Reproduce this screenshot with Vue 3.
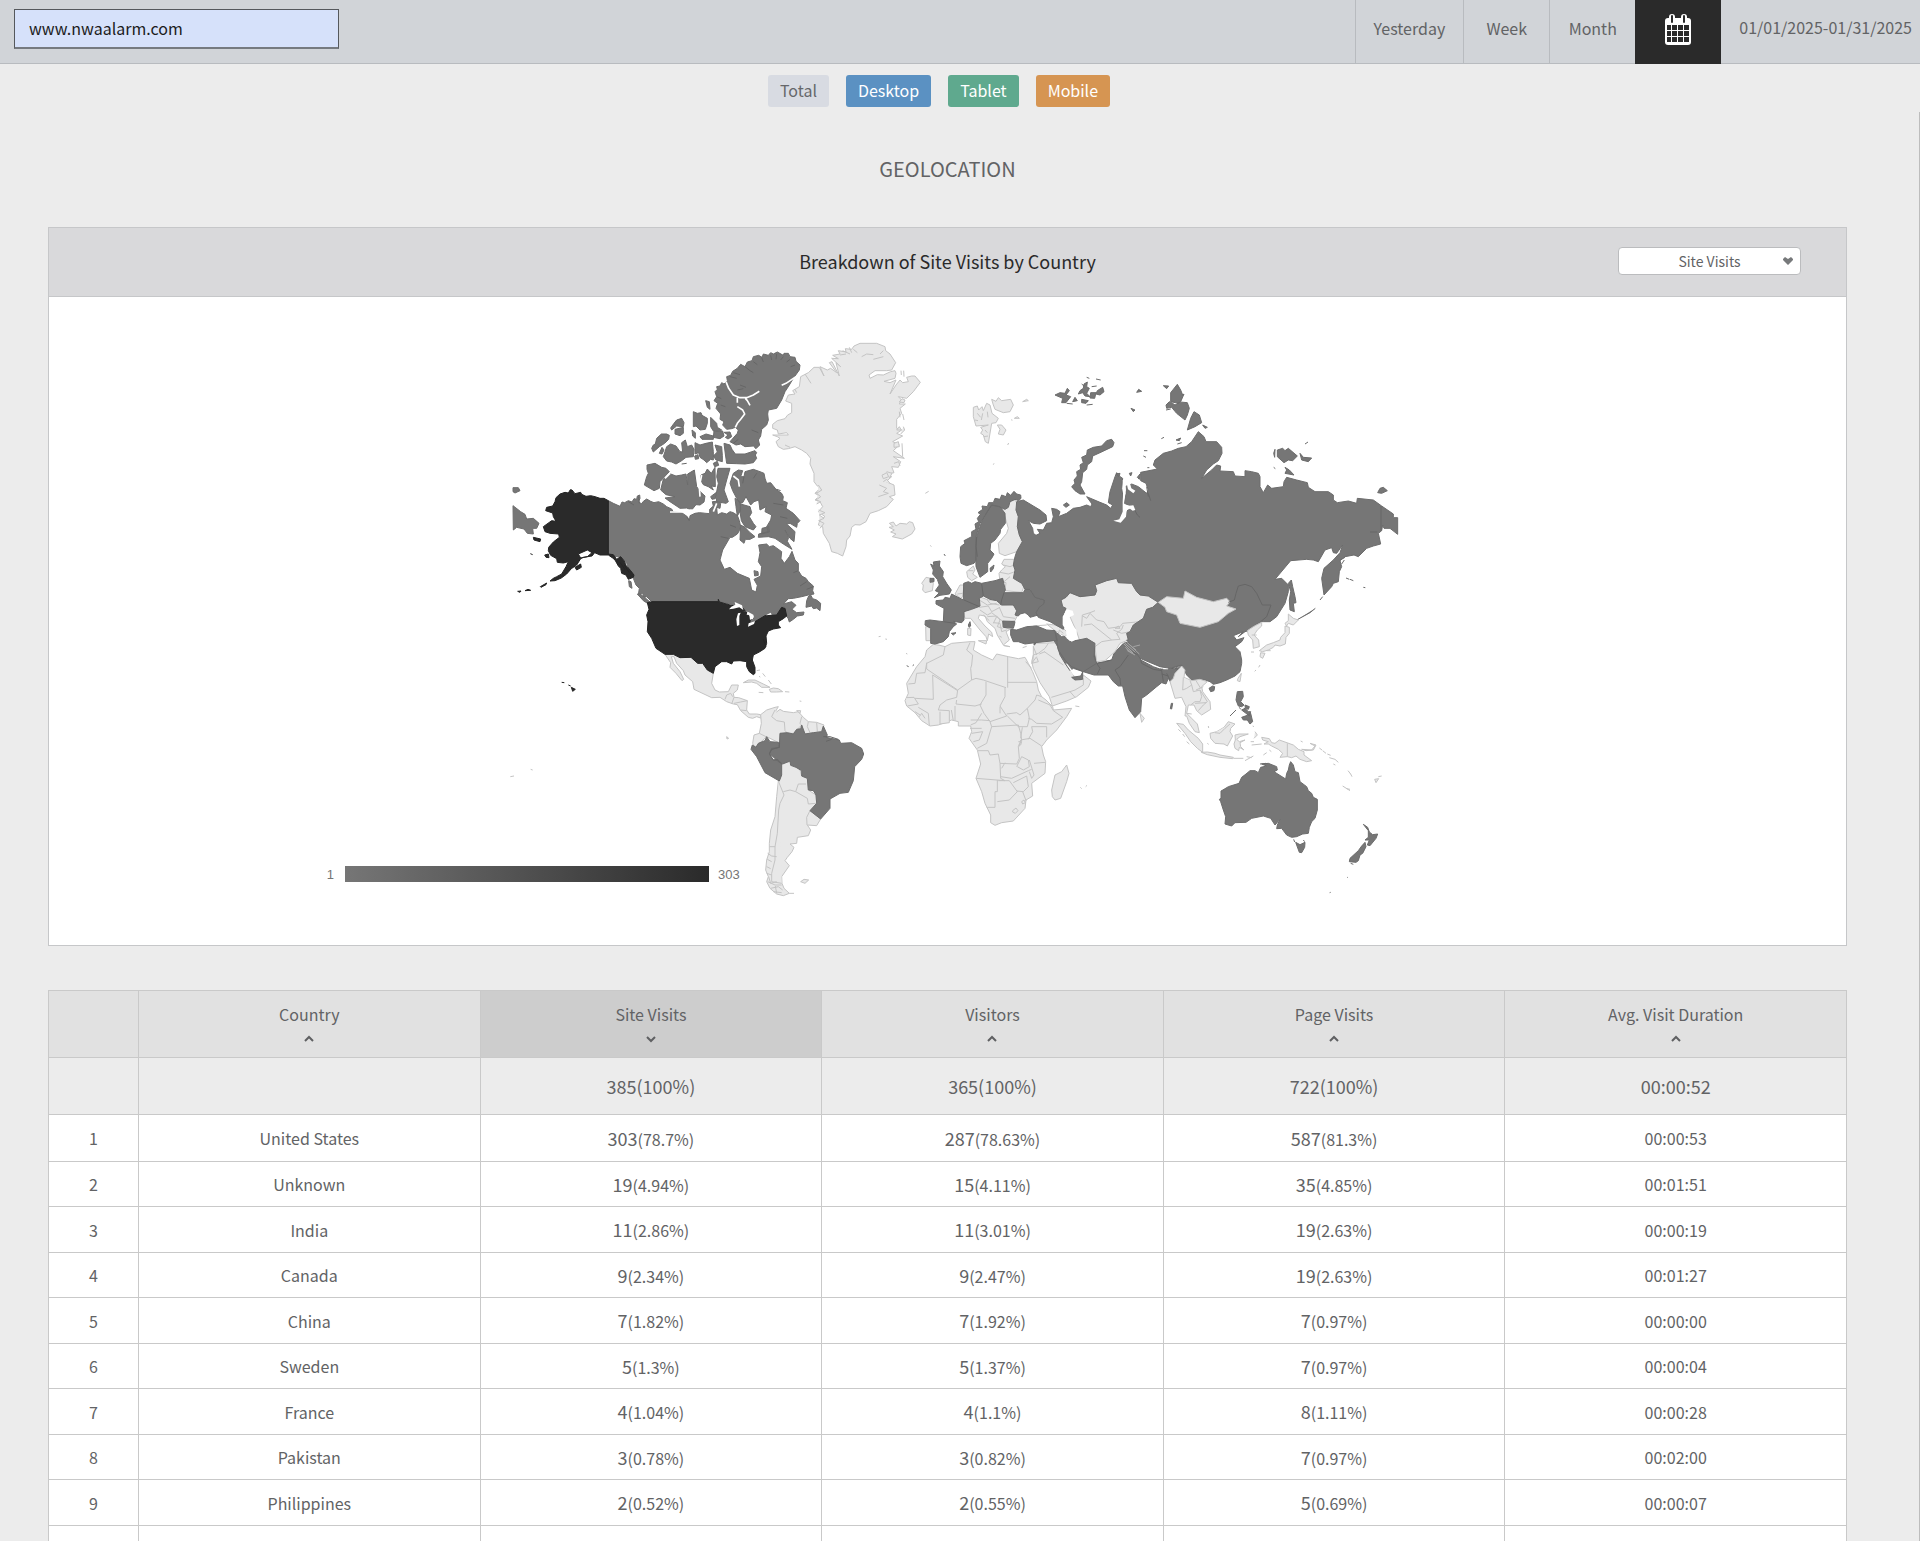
<script setup>
import { ref } from 'vue'

const site = ref('www.nwaalarm.com')
const metric = ref('Site Visits')
const metrics = ['Site Visits', 'Visitors', 'Page Visits']
const periods = ['Yesterday', 'Week', 'Month']
const devices = ['Total', 'Desktop', 'Tablet', 'Mobile']

const columns = [
  { label: 'Country' },
  { label: 'Site Visits', active: true },
  { label: 'Visitors' },
  { label: 'Page Visits' },
  { label: 'Avg. Visit Duration' },
]

const totals = ['385(100%)', '365(100%)', '722(100%)', '00:00:52']

const rows = [
  ['United States', '303', '78.7%', '287', '78.63%', '587', '81.3%', '00:00:53'],
  ['Unknown', '19', '4.94%', '15', '4.11%', '35', '4.85%', '00:01:51'],
  ['India', '11', '2.86%', '11', '3.01%', '19', '2.63%', '00:00:19'],
  ['Canada', '9', '2.34%', '9', '2.47%', '19', '2.63%', '00:01:27'],
  ['China', '7', '1.82%', '7', '1.92%', '7', '0.97%', '00:00:00'],
  ['Sweden', '5', '1.3%', '5', '1.37%', '7', '0.97%', '00:00:04'],
  ['France', '4', '1.04%', '4', '1.1%', '8', '1.11%', '00:00:28'],
  ['Pakistan', '3', '0.78%', '3', '0.82%', '7', '0.97%', '00:02:00'],
  ['Philippines', '2', '0.52%', '2', '0.55%', '5', '0.69%', '00:00:07'],
  ['Brazil', '2', '0.52%', '2', '0.55%', '3', '0.42%', '00:00:12'],
].map(([country, sv, svp, v, vp, pv, pvp, time]) => ({
  country,
  time,
  stats: [[sv, svp], [v, vp], [pv, pvp]],
}))

// Each region holds its outlines in a local grid, three units to a pixel.
const regions = [
  {
    name: 'north-america-arctic',
    origin: [500, 330],
    shapes: [
      ['mid', 'M325,512 340,520 360,529 366,516 374,518 385,512 396,516 402,506 410,508 412,498 419,495 420,505 416,514 424,522 430,514 440,507 452,514 462,518 476,515 490,522 500,530 515,537 520,546 545,548 562,560 568,572 570,557 585,550 598,548 629,551 629,538 640,528 637,515 648,514 655,512 662,520 660,535 650,532 652,555 665,548 680,552 690,545 700,548 712,556 718,572 722,590 718,602 712,612 697,622 690,622 668,660 660,690 673,718 690,712 712,730 748,745 755,780 768,786 772,766 762,748 782,738 785,710 775,695 780,668 776,645 800,642 808,650 820,647 845,665 843,685 853,700 868,680 876,664 885,690 895,700 895,722 905,738 918,745 925,755 940,768 938,782 942,792 925,795 905,800 880,805 865,806 850,822 875,815 888,826 876,838 890,848 912,846 910,855 892,858 880,868 868,876 864,864 858,858 855,832 845,830 830,855 795,865 765,885 748,888 752,868 762,870 757,855 735,850 725,840 705,825 690,822 657,815 655,808 652,815 455,815 440,800 432,802 428,790 415,795 418,775 408,765 400,745 380,700 362,682 340,678 325,672Z'],
      ['mid', 'M920,812 926,798 932,795 938,806 950,810 962,820 960,842 950,834 940,836 935,828 918,832Z M412,792 420,792 434,802 452,818 446,822 430,812Z M386,752 393,755 396,775 388,770Z'],
      ['mid', 'M665,158 672,162 682,152 680,140 692,136 698,124 712,115 722,103 735,110 742,96 756,92 760,80 776,76 786,82 790,72 805,76 812,68 820,72 832,66 850,76 852,70 865,70 870,80 885,82 888,94 900,105 898,120 880,145 868,165 855,185 845,210 830,235 805,240 803,252 805,270 800,285 785,298 782,318 775,330 779,345 768,356 760,348 735,350 722,342 708,345 690,335 712,310 715,300 706,292 695,296 680,298 668,285 672,275 660,268 662,252 648,235 653,220 642,212 650,200 645,185 652,178 650,170 660,168Z'],
      ['mid', 'M672,340 690,345 696,358 706,372 735,372 765,362 770,368 766,375 770,385 760,398 735,402 710,401 680,400 676,372Z M580,245 592,250 603,248 606,256 622,265 622,280 616,298 600,300 588,288 580,290Z M617,212 628,215 630,238 622,232Z M632,262 650,280 652,292 665,300 652,304 640,303 632,290Z M642,303 668,303 672,318 660,326 640,322Z M672,307 690,306 695,320 684,327 676,322 684,315Z M522,280 530,270 545,265 552,278 550,290 530,288 515,300 512,294Z M525,298 550,292 550,310 540,317 525,312Z M576,300 586,308 586,325 578,318Z M455,355 460,345 466,342 470,325 484,312 500,312 508,316 506,328 494,340 478,350 460,366Z'],
      ['mid', 'M478,370 486,352 492,360 486,372Z M490,380 500,350 512,342 528,348 540,365 548,366 545,338 556,330 562,350 575,345 582,358 580,380 558,382 545,392 528,402 515,396 500,393Z M585,338 600,345 618,340 637,336 640,365 640,390 632,388 620,398 612,390 600,382 596,368 585,372Z M584,378 594,374 596,386 586,388Z M600,320 618,312 640,318 640,328 606,328Z M645,345 665,350 667,376 667,395 648,390 640,378 652,366Z M640,400 652,394 656,406 644,410Z'],
      ['mid', 'M441,405 465,400 485,412 498,415 508,425 480,455 478,475 462,482 450,475 433,465 440,440 445,430 441,418Z M482,480 490,447 512,432 528,438 545,435 558,432 563,465 563,432 583,420 590,470 602,486 615,498 612,516 600,525 588,524 575,540 560,534 540,535 510,515 495,504 525,500 498,494Z M603,435 615,430 622,417 634,430 645,412 646,470 634,468 640,480 625,470 610,464 602,450Z M654,415 690,415 680,450 672,480 685,515 678,520 650,515 648,495 655,460 650,440Z M632,500 648,488 646,506 636,508Z'],
      ['mid', 'M700,430 715,420 728,422 722,440 732,440 735,425 760,418 780,425 792,430 795,445 800,460 812,458 828,478 845,490 850,500 848,512 862,518 858,535 880,550 900,572 892,580 890,592 870,580 860,582 885,605 882,635 870,625 855,600 866,622 862,634 876,658 850,642 825,625 805,620 775,622 776,612 805,605 800,590 812,570 815,555 795,545 798,530 780,540 776,510 762,515 752,525 738,500 728,518 720,520 710,505 698,482 690,460Z M722,522 750,530 755,548 748,560 760,580 768,590 760,600 735,590 724,572 720,545Z M722,585 735,592 748,606 765,620 750,628 736,628 732,640 720,630Z M705,505 720,515 722,540 712,558 708,530Z M786,595 806,590 808,606 785,612Z M762,722 774,725 775,736 764,738Z'],
      ['water', 'M678,155 686,175 700,195 720,203 740,203 760,195 778,184 M712,203 712,218 M736,205 742,212 750,226 M712,230 728,240 734,252 722,268 712,280 706,292 M888,140 858,160 845,166 M510,430 495,445 M605,435 598,470 600,500 M700,438 715,450 718,470 M765,555 780,575 772,590 M510,546 545,546 572,540 625,545 M640,545 650,520'],
      ['coast', 'M735,110 750,122 760,128 M760,95 772,104 M785,83 790,96 M812,76 815,90 M830,72 828,88 M850,80 842,90 M870,88 860,96 M885,105 872,110 M690,140 710,145 M700,128 720,134 M720,165 738,172 M712,180 730,176 M650,200 664,206 M662,225 676,230 M755,300 775,308 M700,340 715,328 M830,478 842,482 M820,520 850,525 M840,560 862,565 M732,440 728,460 M770,430 760,445 M545,402 560,400 M560,560 568,572 M690,585 708,592 M662,620 685,625 M385,515 402,525 M416,500 418,520 M940,770 920,778 M895,722 880,728 M920,755 900,768'],
      ['top', 'M325,512 312,505 300,505 285,500 272,497 258,499 245,493 242,487 225,491 216,480 211,479 205,489 195,487 180,492 168,503 165,515 158,528 140,532 137,542 158,549 160,560 168,574 155,572 130,590 135,605 150,610 176,612 178,622 160,636 146,652 145,662 152,676 170,686 172,697 190,699 205,695 198,710 185,732 170,740 160,745 150,753 165,752 184,744 200,732 214,716 230,705 242,686 250,682 276,678 284,668 300,675 325,675 338,684 345,690 355,708 362,715 365,730 378,735 385,748 400,742 402,735 392,722 378,706 372,692 362,680 350,688 340,674 325,672Z M235,672 262,660 276,668 262,680 242,684Z M100,622 122,627 120,635 102,630Z M121,770 140,759 138,764 123,772Z M53,784 63,783 60,787Z M75,782 84,778 92,781Z M134,675 145,672 147,683 138,682Z M225,712 242,702 244,712 230,720Z M91,671 98,674 M360,697 376,720 M372,705 388,728'],
      ['mid', 'M39,527 62,545 75,553 80,567 100,565 117,580 110,595 98,595 100,612 82,610 72,597 50,592 40,600Z M39,473 55,473 60,482 45,489 39,485Z'],
    ],
  },
  {
    name: 'greenland',
    origin: [740, 330],
    shapes: [
      ['none', 'M98,283 112,272 135,266 142,256 155,248 155,220 137,213 145,195 165,192 158,182 178,170 182,140 205,128 222,112 238,112 252,138 240,110 262,120 272,115 290,128 268,98 276,95 298,138 288,98 302,110 275,85 295,86 278,76 300,72 295,62 318,66 316,56 335,58 342,48 360,40 410,40 435,50 437,62 450,72 467,98 455,120 440,122 405,122 387,135 390,145 412,134 430,135 452,125 465,122 468,130 465,145 432,154 450,158 468,150 450,192 468,165 480,150 488,158 505,155 500,142 515,138 525,138 541,157 520,185 500,205 475,200 485,210 478,222 496,222 480,235 485,250 470,268 470,295 485,300 470,310 488,318 458,335 478,345 460,362 493,385 460,380 482,395 475,412 455,410 462,428 428,435 455,440 438,455 462,465 465,495 448,500 460,508 440,530 415,542 390,550 378,575 360,585 345,584 335,592 330,618 320,630 318,650 308,678 292,670 275,665 268,640 250,610 248,590 235,585 240,570 255,560 235,545 248,530 240,515 225,510 238,498 225,490 245,480 232,468 222,455 222,430 210,402 212,385 200,370 185,360 165,350 145,356 130,358 115,350 108,335 120,325 112,320 98,315 145,315 140,308 115,312 112,300 98,295Z'],
      ['none', 'M448,580 460,576 468,588 480,580 500,582 508,575 518,578 525,597 515,612 487,627 457,620 468,612 452,606 463,600 447,592 460,590Z M700,232 712,228 716,240 726,230 730,242 740,220 750,225 756,250 775,265 768,278 755,280 745,340 736,335 730,315 722,310 728,300 722,292 745,285 708,288 700,260Z M755,208 768,214 775,203 785,212 812,208 820,225 810,245 790,248 765,238 760,225Z M772,285 785,285 798,300 790,315 775,312 780,298Z M848,215 860,208 865,212Z M823,265 832,260 838,265Z M815,268 816,272 M803,345 806,339 M760,404 762,400 M556,490 566,484 M571,646 574,650'],
      ['none', 'M483,122 484,135 M491,122 492,140 M486,206 495,210 492,218 478,216Z M488,252 492,270 M480,262 478,245 M490,290 494,300 482,312 M470,300 478,290 484,300Z M462,340 475,335 478,350 462,352Z M486,340 488,380 M462,400 476,395 480,408 M426,436 440,428 446,440 430,446Z M440,425 456,430 448,444 M430,455 440,448 450,460 M418,465 440,475 430,485 445,490 415,500 M235,465 245,480 230,490 242,500 228,510 242,515 230,522 M236,540 255,548 238,555 252,565 236,572 252,580 240,595 M225,490 235,480 M195,132 213,160 M300,75 318,72 M308,62 330,72 M328,52 335,68 M340,58 352,68 M365,80 380,72 400,74 M420,72 430,62 M400,88 430,80 M165,178 170,188 M135,345 150,352 M712,250 722,262 M728,250 724,270 M742,245 744,262 M735,300 742,308 M732,320 744,318 M705,270 714,272'],
    ],
  },
  {
    name: 'americas',
    origin: [500, 580],
    shapes: [
      ['none', 'M495,223 520,223 540,233 573,232 593,250 608,250 622,270 640,280 635,310 645,330 658,336 685,335 695,315 715,315 712,330 700,340 702,352 716,353 742,362 740,390 748,402 770,402 782,404 785,415 770,410 758,415 745,412 722,392 712,374 700,372 680,365 660,352 635,353 582,328 578,305 555,285 550,272 530,250 522,230 514,230 520,250 540,275 551,298 546,302 528,280 510,262 512,248Z'],
      ['none', 'M782,404 800,390 825,382 835,380 822,402 840,388 850,394 880,398 895,395 910,412 925,425 950,427 972,435 965,455 915,462 905,435 880,460 840,460 840,490 800,470 765,502 758,490 762,465 778,460 784,430Z'],
      ['none', 'M845,550 870,545 900,570 905,588 922,595 925,630 948,645 950,670 930,692 962,717 950,737 922,735 932,750 925,767 892,772 890,790 870,792 882,802 876,815 862,832 855,842 868,857 845,890 846,910 852,925 868,940 850,947 830,942 810,925 800,905 805,890 797,870 800,840 808,815 808,790 812,750 825,710 830,650 835,603 842,590Z'],
      ['none', 'M730,308 745,300 765,300 790,312 810,322 785,322 770,310 755,306Z M808,328 820,324 835,326 848,335 830,336 812,336Z M776,337 790,338 M855,335 868,336 M770,272 780,270 M788,280 796,290 M805,300 814,312 M778,288 780,292 M890,392 902,392 900,400Z M899,363 904,364 M680,470 686,475 681,477Z M1136,170 1142,169 M1156,177 1161,178 M31,590 42,588 M92,568 98,570 M902,905 912,898 926,900 915,910Z M868,940 882,940'],
      ['none', 'M825,390 815,410 830,422 853,426 855,452 865,462 M905,410 900,430 905,436 M925,425 922,440 930,458 M950,428 952,455 M778,460 798,470 M675,358 680,345 692,340 698,350 M695,372 702,352 M702,370 722,366 742,362 M722,390 740,392 M835,603 852,645 840,670 836,690 832,760 825,800 825,840 815,880 815,905 845,910 M850,635 870,630 887,635 895,612 918,612 M887,635 922,655 925,672 948,670 M930,692 920,712 921,735 M808,800 826,800 M802,838 815,845 M800,860 812,866 M800,880 815,885 M803,905 825,915 845,915 M812,925 835,920 848,930 M820,935 845,938 M803,820 815,828 830,830 M806,890 812,910 830,905 M826,918 830,940'],
      ['mid', 'M840,460 862,458 880,462 890,448 902,446 905,435 915,462 940,458 965,455 970,438 982,465 978,472 1018,480 1022,490 1055,488 1085,505 1091,522 1085,538 1064,560 1060,602 1045,637 1020,640 990,657 990,685 962,717 930,692 950,670 948,645 940,632 925,630 922,595 905,588 905,572 888,562 872,556 870,543 848,552 835,545 808,520 815,505 838,502Z M800,470 810,485 835,487 838,502 815,508 808,522 820,540 832,538 845,550 845,585 838,603 795,578 770,530 753,508 757,495 768,502 775,490 795,482Z'],
      ['coast', 'M970,470 990,470 1015,478 M978,484 995,478 M838,487 838,502 815,508 808,522 820,540 832,540 845,552'],
      ['top', 'M442,68 455,65 655,65 655,58 658,66 690,75 705,78 725,80 735,92 745,105 752,112 748,138 762,130 765,125 795,107 830,105 845,82 855,85 860,108 850,116 835,125 835,135 842,143 820,147 805,153 798,168 800,190 795,205 778,216 760,225 757,240 765,262 765,280 760,284 748,275 740,260 740,245 720,242 700,243 695,252 680,245 665,245 645,260 640,280 622,270 608,250 593,250 573,232 540,233 520,223 495,223 468,205 455,175 442,155 444,125 440,105 447,88Z M185,307 193,308 M205,315 212,318 M214,322 226,328 218,334Z M790,178 798,200'],
      ['sea', 'M687,88 694,80 706,74 704,66 726,76 730,90 718,82 700,86Z M711,138 709,118 714,100 722,98 718,108 718,135Z M726,92 745,96 760,104 762,112 750,120 748,105 740,104 742,96Z M744,140 746,130 765,124 762,132Z M798,106 812,98 815,104Z'],
    ],
  },
  {
    name: 'africa-middle-east',
    origin: [890, 600],
    shapes: [
      ['none', 'M130,133 150,136 165,140 185,130 240,125 255,125 250,150 275,165 308,180 320,162 355,170 385,176 405,172 415,190 428,215 440,245 445,270 455,290 468,300 488,320 490,330 545,325 530,350 500,390 470,420 455,440 460,465 467,485 465,520 425,550 428,588 408,600 405,625 370,663 335,668 315,676 302,668 302,645 285,610 275,575 258,535 272,492 262,450 237,415 245,395 242,378 205,378 205,365 185,360 145,375 120,378 95,362 75,338 50,318 45,302 55,280 50,250 80,200 105,170 110,150Z'],
      ['none', 'M430,140 437,130 500,128 503,145 525,185 548,220 556,238 575,240 580,225 603,243 595,262 560,290 530,303 487,318 478,290 450,248 430,205 425,185 430,165Z M485,570 495,525 515,515 530,495 537,520 530,545 512,595 495,600 487,590Z M750,340 763,355 755,367Z M571,562 575,566 M587,560 591,556 M556,318 568,320 M48,160 52,162 M342,137 360,140 M398,143 410,139'],
      ['none', 'M165,140 160,165 110,190 105,218 80,220 75,250 55,252 M110,188 110,207 203,270 245,240 M230,150 248,165 245,195 242,205 245,240 M240,128 230,150 M128,225 130,298 75,295 M128,225 203,272 M203,270 200,292 170,300 150,315 145,330 M48,293 72,292 85,312 52,318 M245,240 258,235 280,240 348,263 M353,170 353,263 M353,247 440,247 M345,263 345,290 330,318 350,348 300,365 282,340 270,315 288,285 288,245 M200,300 198,312 255,318 275,312 M350,342 380,338 390,345 412,325 435,300 440,285 455,290 M330,340 330,320 M412,325 418,355 412,380 385,380 352,348 M445,300 480,315 490,332 518,352 485,372 440,370 425,358 415,355 M425,380 470,380 470,412 M300,365 305,380 385,375 392,400 395,420 385,440 388,475 380,492 330,490 325,462 300,465 295,452 262,452 M305,380 290,430 262,445 M242,360 275,360 300,362 M275,340 258,368 242,375 M278,395 268,420 250,425 M245,400 278,395 M330,490 332,535 345,542 258,535 M335,505 345,488 M332,530 365,535 415,512 425,508 M380,500 395,470 415,480 418,500 400,510 382,500 M418,480 432,525 425,535 418,515 M432,490 465,487 M322,540 322,575 315,575 315,622 290,622 M325,542 358,542 382,575 358,600 322,605 M370,548 410,528 415,560 400,575 380,573 M398,575 408,602 M387,440 392,420 420,415 455,438 M385,425 395,425 392,435 385,435 M397,382 392,415 M425,380 428,395 415,418 M118,378 115,340 85,322 M150,335 150,372 178,368 178,332 145,330 M184,330 190,362 M195,318 195,362 M75,335 90,345 M88,350 95,340 105,355 M240,385 275,385 M368,632 378,624 384,632 376,640 368,636Z M395,605 402,600 406,608 398,612Z M407,185 425,205 M428,190 430,165 445,160 465,145 475,130 M440,170 425,190 445,185 440,172 M463,155 520,195 M465,155 448,162 M540,275 555,270 580,255 580,235 M484,292 540,275 555,292 M430,140 440,165'],
      ['mid', 'M467,110 497,110 505,128 550,125 590,115 612,125 615,165 620,190 665,180 672,160 700,130 720,125 740,150 752,180 790,200 812,208 835,205 840,198 870,190 880,202 865,220 845,252 835,235 828,252 815,248 800,260 770,285 755,295 752,335 735,353 718,330 705,290 698,258 685,258 670,245 655,225 612,225 580,215 550,205 540,212 525,190 510,165 503,140 490,118Z M545,232 572,228 578,216 578,238 555,240Z M844,310 848,310 845,327 841,326Z M50,197 56,200 M68,197 72,194 M432,128 438,130 432,135Z'],
      ['coast', 'M612,165 620,190 665,180 M620,190 630,205 622,222 M715,165 690,200 675,210 690,235 692,255 M752,180 755,190 790,208 815,212 812,205 M815,200 840,200 M815,222 835,228 M815,212 820,245 M830,220 840,240 M835,200 845,205 870,208 M715,150 745,165'],
      ['hatch', 'M703,128 740,160 M715,128 752,162 M706,142 722,156 M735,140 752,136 M712,152 735,165 M842,204 850,198 M852,206 860,198 M862,204 870,196'],
      ['sea', 'M818,203 835,203 834,208 820,208Z M527,190 532,192 555,222 550,225Z'],
    ],
  },
  {
    name: 'eurasia',
    origin: [900, 370],
    shapes: [
      ['none', 'M483,690 498,682 510,668 540,680 585,675 590,662 585,645 620,632 650,625 655,638 695,640 710,665 720,675 745,678 775,697 758,712 740,718 730,745 700,765 690,785 680,790 685,810 660,820 645,845 615,872 590,875 585,830 540,815 530,785 512,745 500,718 488,710Z'],
      ['none', 'M297,410 315,418 325,412 330,395 345,390 352,402 348,420 355,440 352,470 358,495 367,515 350,545 315,557 298,550 295,520 320,490 325,475 315,440Z M77,770 95,772 92,812 78,812Z M68,660 70,645 65,640 78,622 92,625 100,640 97,662 75,668Z M200,605 220,588 225,600 218,612 232,622 215,632 203,622Z M165,672 180,645 192,645 188,680 182,685Z M305,582 312,568 342,568 342,585 348,600 345,620 355,630 370,640 372,650 365,667 315,662 318,638 300,635 297,610 305,600 316,590Z'],
      ['none', 'M190,725 215,715 235,712 238,680 265,690 300,690 305,705 335,703 345,708 350,725 355,730 345,752 310,755 308,770 330,778 318,785 328,810 310,825 302,812 292,795 285,775 262,755 255,738 238,735 235,745 255,768 275,787 278,800 266,792 262,812 258,800 240,780 212,745 195,745Z M235,812 260,812 258,822Z M203,775 213,775 212,797 203,795Z M440,762 465,765 490,775 505,790 495,800 480,790 465,782Z M310,826 330,830 M298,798 305,802 M440,765 400,768'],
      ['none', 'M545,770 547,735 570,728 585,722 M548,738 560,745 570,730 590,750 612,755 625,775 660,770 668,760 720,755 M552,765 575,762 635,810 660,808 M660,808 650,790 665,778 670,765 M640,780 665,790 690,785 M645,775 660,775 655,768Z M585,830 605,815 635,810 M300,607 325,612 345,605 M312,635 330,620 M310,585 330,590 342,585 M238,690 262,705 290,700 M238,712 265,708 275,725 300,712 M240,720 262,735 275,728 290,740 280,760 M262,740 290,738 300,750 292,770 308,775 M290,740 310,755 M298,712 310,740 345,745 M280,758 300,760 305,785 320,780 M250,735 268,752 M298,705 270,700 262,690 M205,602 220,602 M475,795 478,780 490,790 M172,672 188,670'],
      ['mid', 'M182,530 195,520 192,512 215,500 215,485 228,478 225,462 236,455 232,445 242,432 234,428 248,418 246,408 262,410 266,398 280,398 285,385 300,388 305,375 318,380 322,368 332,376 342,364 350,372 362,375 363,385 356,392 345,388 330,395 325,412 315,418 297,410 275,405 262,425 240,460 228,500 228,570 222,580 200,587 183,580 180,560Z M230,500 245,455 262,425 275,405 300,410 315,430 316,460 302,478 300,490 285,510 272,520 270,540 282,552 275,565 263,580 263,605 240,622 228,590 227,560Z M270,595 282,585 280,596 272,606Z'],
      ['mid', 'M92,582 102,588 100,576 120,573 118,588 130,605 128,620 140,640 154,660 148,672 120,676 103,683 118,668 106,662 118,645 112,628 98,612 100,600Z M90,625 102,625 102,635 90,637Z M132,552 136,558 M191,640 205,635 215,640 225,635 245,640 285,632 308,625 316,660 312,668 370,668 375,658 390,658 405,682 433,690 432,705 418,712 410,725 415,735 390,742 385,735 375,728 360,732 355,738 345,735 350,722 340,705 305,705 290,692 270,688 250,678 238,685 240,708 215,718 192,725 192,750 185,758 160,754 170,762 160,770 148,785 145,800 130,815 105,822 92,820 92,775 75,765 76,752 90,750 130,755 132,715 108,702 108,692 130,690 135,682 150,685 155,672 190,690Z M154,790 168,788 160,795Z M205,765 210,755 212,768 207,772Z'],
      ['mid', 'M308,753 345,755 343,765 340,775 310,772Z M332,778 350,780 380,770 410,768 440,780 465,782 472,812 465,812 405,818 375,822 355,815 340,815 332,795Z M465,785 485,800 495,800 510,815 535,810 560,805 585,820 582,860 590,880 550,905 515,890 495,870 475,840Z'],
      ['mid', 'M350,395 370,390 400,408 420,420 438,435 440,452 420,462 400,460 385,452 398,475 400,490 408,496 420,490 412,478 430,480 440,460 455,458 460,440 455,415 470,418 480,425 475,440 500,430 520,415 540,412 560,405 572,410 576,402 560,380 600,397 620,405 632,415 638,405 625,398 630,365 645,320 650,308 660,320 668,325 665,355 672,400 668,430 655,455 668,450 680,425 690,412 700,410 672,400 678,370 675,350 695,342 715,350 740,370 745,360 738,340 722,332 722,307 772,297 760,285 765,270 790,250 815,243 835,235 858,230 875,215 895,185 912,200 918,215 950,215 965,232 966,250 955,272 940,282 920,300 905,325 935,300 950,285 962,288 960,303 1000,305 1005,318 1035,320 1035,302 1055,305 1075,310 1080,320 1080,350 1090,368 1103,345 1115,355 1150,350 1152,335 1160,322 1190,330 1222,338 1225,352 1245,365 1285,365 1300,375 1300,390 1312,398 1345,393 1370,400 1372,385 1420,390 1445,408 1480,432 1480,443 1493,443 1493,493 1470,475 1452,475 1448,465 1445,482 1435,490 1442,522 1420,528 1400,535 1375,560 1362,555 1335,560 1320,572 1325,590 1318,605 1315,635 1300,640 1295,650 1272,675 1265,625 1272,595 1300,570 1320,548 1328,525 1310,550 1300,548 1295,533 1275,540 1255,575 1240,570 1220,568 1172,572 1125,628 1145,625 1165,645 1165,665 1155,700 1130,740 1110,755 1090,755 1085,755 1065,765 1058,778 1035,785 1015,800 1030,785 1000,797 1010,810 1032,803 1025,815 1005,830 1020,845 1025,870 1025,880 1020,905 1005,918 980,930 960,938 940,943 930,935 915,930 875,930 860,915 845,885 810,895 780,890 720,865 700,835 680,810 685,810 680,790 690,785 700,765 730,745 740,718 758,712 775,697 745,678 720,675 710,665 695,640 655,638 650,625 620,632 585,645 590,662 585,675 540,680 510,668 498,682 483,690 488,710 498,715 488,740 495,765 490,778 450,755 415,742 408,728 418,712 433,700 433,690 405,682 390,658 375,658 365,640 340,625 345,600 340,585 345,560 350,545 367,515 358,495 352,470 355,440 348,420Z'],
      ['none', 'M775,697 800,680 850,685 855,663 890,682 940,695 980,685 990,695 980,708 1008,717 985,730 955,755 900,772 840,760 830,735 800,725 795,712Z'],
      ['coast', 'M1113,705 1100,740 1082,755 M1113,705 1087,705 1070,670 1055,650 1035,643 1015,648 1008,670 1003,690 985,697 M1443,408 1443,482 M1410,486 1432,486 M700,412 712,435 720,442 M745,370 752,392 M740,350 745,380 M230,500 228,530 232,560 M245,642 250,678 M312,668 305,690 302,705 M192,690 238,710 M130,755 165,760 M650,447 660,452'],
      ['sea', 'M500,718 518,722 522,735 508,742 512,760 530,780 530,808 515,815 500,805 498,780 488,765 488,740Z'],
      ['mid', 'M515,350 525,340 522,330 532,318 530,305 542,298 540,285 550,278 545,262 560,255 562,240 580,232 605,228 620,212 635,208 642,218 638,230 600,248 578,258 575,275 562,285 560,298 548,308 545,335 540,345 555,372 540,372 525,362Z M465,75 480,68 495,70 502,55 508,62 498,75 512,80 498,98 485,98 488,85Z M540,62 550,55 552,42 562,36 560,50 568,55 560,70 570,80 555,78 548,68 535,72Z M572,68 588,68 584,85 570,84Z M592,62 608,52 612,65 600,75 588,72Z M545,88 565,92 558,100 545,98Z M518,95 525,82 532,92Z M560,22 568,25 M588,27 602,30 M545,42 552,48 M575,50 590,48 M500,100 518,102 M560,105 578,103 M710,67 716,58 725,64Z M693,115 705,120 700,125Z M490,405 500,398 508,405 498,412Z M790,47 806,48 800,56Z M812,68 832,43 842,60 848,75 852,72 842,95 835,100 812,95Z M798,105 808,95 815,98 825,105 840,96 862,98 868,115 862,135 855,150 830,130 815,112 800,115Z M798,120 812,117 M862,180 872,145 882,125 898,135 905,158 885,170Z M908,165 922,172 915,175Z M784,206 792,202 M828,210 842,204 838,212Z M832,222 845,218 M732,242 742,242 M730,258 738,262 M742,293 748,293 M648,312 660,310 657,320Z M688,310 696,308 692,318Z M712,322 720,312 718,328Z'],
      ['mid', 'M1121,250 1125,238 1124,262Z M1132,240 1148,235 1155,242 1165,235 1192,258 1178,272 1165,270 1152,278 1132,260Z M1200,250 1210,262 1235,264 1225,275 1205,270Z M1215,222 1224,216 M1155,292 1168,300 1182,315 1155,310 1160,300Z M1121,292 1126,296 M1433,368 1440,355 1450,352 1462,362 1445,370Z M1165,640 1174,630 1178,650 1185,680 1188,698 1180,700 1183,725 1170,720 1168,690 1172,665Z M1190,750 1230,728 1246,715 M1260,690 1268,680 M1338,624 1348,628 M1350,628 1360,632 M1390,652 1396,653 M1320,570 1335,562 M1325,582 1333,570'],
      ['sea', 'M682,320 692,330 700,325 706,338 690,340 694,355 706,362 700,370 684,358 680,340Z M668,330 676,328 678,360 672,400 680,408 700,406 706,420 698,422 690,416 680,420 678,440 662,458 640,452 658,448 668,425 668,395 670,360Z'],
      ['hatch', 'M670,820 700,850 M680,816 718,852 M680,838 700,852 M700,830 720,825 M690,825 708,840'],
    ],
  },
  {
    name: 'oceania',
    origin: [1120, 590],
    shapes: [
      ['none', 'M185,228 195,240 192,262 215,272 240,268 262,275 245,290 248,305 270,335 272,358 245,375 230,362 222,345 205,345 200,370 215,385 232,402 238,428 225,425 208,400 200,378 195,378 198,350 185,322 165,325 150,275 160,265 165,250Z M382,122 400,110 425,97 425,108 412,120 402,135 416,150 418,170 400,175 398,150 385,135Z M393,186 402,186 M354,265 364,250 360,275 352,272Z M505,72 520,85 535,90 520,105 505,100 500,108 495,100 505,92Z M495,108 508,112 508,130 498,142 496,162 480,168 465,165 460,172 445,180 428,185 418,182 440,165 460,158 480,150 482,142 495,128Z M422,188 435,190 428,205 420,200Z M440,182 452,182 M416,232 420,225 M404,244 408,240'],
      ['none', 'M170,400 190,403 205,420 235,445 248,462 248,487 232,475 212,455 195,430Z M175,418 182,425 M188,432 194,440 M200,455 208,462 M244,487 262,486 285,490 300,495 340,502 338,506 300,502 262,494Z M270,430 290,425 312,412 325,395 345,402 332,415 330,425 338,438 322,468 312,462 285,460 272,445Z M345,435 358,432 385,432 360,440 350,448 358,455 375,450 360,458 362,470 372,480 358,472 356,482 345,475 342,462 346,450Z M340,505 370,505 M375,512 400,498 M380,500 395,503 M405,425 412,435 402,445 M395,465 425,462 M430,495 440,488 M448,480 454,485 M392,455 402,455 M398,408 402,410 M265,408 266,414 M262,460 266,463'],
      ['none', 'M425,442 448,446 455,458 465,460 478,450 520,465 535,478 552,485 552,495 575,512 560,515 540,508 528,498 515,503 502,500 480,502 488,490 475,478 455,468 445,462 432,462 445,455 428,450Z M545,478 575,480 585,468 570,460 588,465 580,480 558,482Z M542,453 548,456 M598,474 606,480 M608,482 618,490 M622,492 632,496 M628,503 645,508 M645,508 655,517 M640,522 646,525 M684,542 692,552 696,560 M668,588 690,602 M680,596 690,598 M764,568 776,566 768,578Z M775,560 785,558'],
      ['none', 'M190,262 188,300 200,295 215,285 210,272 M215,285 220,305 240,300 245,320 240,335 225,335 212,345 M228,272 242,295 M240,300 262,335 250,345 235,362 M225,340 258,338 M200,370 215,372 M285,428 300,430 315,415 330,402 M502,460 502,500 M395,135 410,135 M250,290 228,300'],
      ['mid', 'M303,603 312,598 325,590 357,580 365,562 378,552 390,542 405,542 415,548 422,532 440,528 425,522 445,520 470,530 472,540 462,545 497,567 500,550 505,540 508,525 512,515 520,525 525,545 535,548 540,575 560,590 565,602 575,610 580,622 592,628 592,660 585,685 575,695 568,712 565,730 548,732 530,740 515,742 500,735 485,715 470,716 472,705 480,688 465,705 452,685 430,678 395,685 378,697 345,698 335,708 315,702 317,680 310,660 302,635 298,628 303,625Z M527,757 540,764 555,757 554,772 545,788 538,787Z M521,748 524,756 M550,750 554,755 M730,703 743,712 748,726 758,734 773,732 768,745 750,767 742,765 748,750 735,750 745,742 745,722Z M735,757 738,770 728,790 720,795 715,812 708,817 688,815 690,805 715,782 725,768Z M692,820 700,823 M682,862 684,863 M629,908 632,907 M267,295 278,288 284,290 282,302 272,305Z M420,522 438,520'],
      ['mid', 'M352,305 368,304 370,320 362,335 372,345 365,350 355,348 348,330Z M375,345 388,350 385,358 376,355Z M365,360 375,355 385,365 392,365 388,378 378,370Z M365,382 382,376 392,370 398,395 390,402 382,390 370,390Z M330,378 348,360 M358,352 362,358'],
    ],
  },
]
</script>

<template>
  <div class="page">
    <header class="topbar">
      <input v-model="site" class="site" type="text" aria-label="Site" />
      <nav class="periods" aria-label="Period">
        <button v-for="p in periods" :key="p" class="period" type="button">{{ p }}</button>
        <button class="period calendar" type="button" aria-label="Pick dates">
          <svg width="26" height="31" viewBox="0 0 26 31" aria-hidden="true">
            <rect x="0" y="4" width="26" height="27" rx="3" fill="#fff" />
            <rect x="4" y="0" width="6" height="10" rx="3" fill="#fff" />
            <rect x="16" y="0" width="6" height="10" rx="3" fill="#fff" />
            <path d="M7,2 V8 M19,2 V8" stroke="#2a2a2a" stroke-width="2" stroke-linecap="round" />
            <path
              fill="#2a2a2a"
              d="M2,11h4v5h-4z M7,11h5v5h-5z M13,11h5v5h-5z M19,11h5v5h-5z M2,17h4v5h-4z M7,17h5v5h-5z M13,17h5v5h-5z M19,17h5v5h-5z M2,23h4v5h-4z M7,23h5v5h-5z M13,23h5v5h-5z M19,23h5v5h-5z"
            />
          </svg>
        </button>
        <span class="range">01/01/2025-01/31/2025</span>
      </nav>
    </header>

    <main class="content">
      <div class="devices">
        <button v-for="d in devices" :key="d" type="button" :class="['chip', d.toLowerCase()]">{{ d }}</button>
      </div>

      <h1 class="heading">GEOLOCATION</h1>

      <section class="panel">
        <div class="panel-head">
          <h2 class="panel-title">Breakdown of Site Visits by Country</h2>
          <div class="picker">
            <select v-model="metric" aria-label="Metric">
              <option v-for="m in metrics" :key="m">{{ m }}</option>
            </select>
            <svg class="picker-arrow" width="10" height="8" viewBox="0 0 10 8" aria-hidden="true">
              <path d="M0,2 L2,0 5,2 8,0 10,2 10,3 5,8 0,3Z" fill="#77797b" />
            </svg>
          </div>
        </div>
        <svg class="map" viewBox="49 297 1797 648" role="img" aria-label="Site visits by country">
          <defs>
            <linearGradient id="scale">
              <stop offset="0" stop-color="#767676" />
              <stop offset="1" stop-color="#2a2a2a" />
            </linearGradient>
          </defs>
          <g
            v-for="r in regions"
            :key="r.name"
            :transform="`translate(${r.origin[0]} ${r.origin[1]}) scale(${1 / 3})`"
          >
            <path v-for="(s, i) in r.shapes" :key="i" :class="s[0]" :d="s[1]" />
          </g>
          <rect x="345" y="866" width="364" height="16" fill="url(#scale)" />
          <text x="334" y="879" text-anchor="end" class="legend">1</text>
          <text x="718" y="879" class="legend">303</text>
        </svg>
      </section>

      <table class="stats">
        <colgroup>
          <col class="col-rank" />
          <col v-for="c in columns" :key="c.label" />
        </colgroup>
        <thead>
          <tr>
            <th></th>
            <th v-for="c in columns" :key="c.label" :class="{ active: c.active }">
              <button class="sort" type="button">
                <span>{{ c.label }}</span>
                <svg width="12" height="8" viewBox="0 0 12 8" aria-hidden="true">
                  <path
                    :d="c.active ? 'M2,2 L6,6 10,2' : 'M2,6 L6,2 10,6'"
                    fill="none"
                    stroke="#5f6062"
                    stroke-width="2"
                  />
                </svg>
              </button>
            </th>
          </tr>
        </thead>
        <tbody>
          <tr class="totals">
            <td></td>
            <td></td>
            <td v-for="t in totals" :key="t">{{ t }}</td>
          </tr>
          <tr v-for="(r, i) in rows" :key="r.country">
            <td>{{ i + 1 }}</td>
            <td>{{ r.country }}</td>
            <td v-for="(s, j) in r.stats" :key="j"><span class="count">{{ s[0] }}</span>({{ s[1] }})</td>
            <td>{{ r.time }}</td>
          </tr>
        </tbody>
      </table>
    </main>
    <div class="edge"></div>
  </div>
</template>

<style>
body {
  margin: 0;
  background: #ececec;
}
</style>

<style scoped>
.page {
  position: relative;
  height: 100vh;
  overflow: hidden;
  background: #ececec;
  color: #626365;
  font-family: "Noto Sans CJK SC", "Noto Sans", sans-serif;
  font-size: 16px;
  line-height: 24px;
}
button,
input,
select {
  font: inherit;
  color: inherit;
  margin: 0;
}
button {
  border: 0;
  background: none;
  padding: 0;
  cursor: pointer;
}
.topbar {
  display: flex;
  justify-content: space-between;
  height: 63px;
  background: #d1d4d8;
  border-bottom: 1px solid #b8bbbf;
}
.site {
  box-sizing: border-box;
  width: 325px;
  height: 40px;
  margin: 9px 0 0 14px;
  padding: 0 14px 2px;
  border: 1px solid #55585c;
  border-bottom-width: 2px;
  border-bottom-color: #767a80;
  background: #d6e1fa;
  color: #1c1c1c;
}
.periods {
  display: flex;
}
.period {
  box-sizing: border-box;
  min-width: 86px;
  padding: 0 18px 8px;
  border-left: 1px solid #b8bbbf;
}
.calendar {
  height: 64px;
  padding-bottom: 6px;
  border: 0;
  background: #2a2a2a;
}
.calendar svg {
  display: block;
  margin: 0 auto;
}
.range {
  padding: 15px 8px 0 18px;
}
.content {
  padding: 11px 73px 0 48px;
}
.devices {
  display: flex;
  justify-content: center;
  gap: 17px;
  padding-right: 17px;
}
.chip {
  height: 32px;
  padding: 0 12px 3px;
  border-radius: 3px;
  color: #fff;
}
.total {
  background: #d8dbe2;
  color: #66676a;
}
.desktop {
  background: #5b91c2;
}
.tablet {
  background: #5fa98e;
}
.mobile {
  background: #d69552;
}
.heading {
  margin: 46px 0 42px;
  font-size: 20px;
  line-height: 32px;
  font-weight: 400;
  text-align: center;
}
.panel {
  border: 1px solid #c6c7c9;
  background: #fff;
}
.panel-head {
  position: relative;
  display: flex;
  align-items: center;
  justify-content: center;
  height: 68px;
  background: #d9d9db;
  border-bottom: 1px solid #c6c7c9;
}
.panel-title {
  margin: 0 0 2px;
  font-size: 18px;
  line-height: 28px;
  font-weight: 400;
  color: #2a2a2a;
}
.picker {
  position: absolute;
  top: 19px;
  right: 45px;
  width: 183px;
  height: 28px;
}
.picker select {
  box-sizing: border-box;
  display: block;
  width: 100%;
  height: 100%;
  padding: 0;
  border: 1px solid #bbbcbe;
  border-radius: 4px;
  background: #fff;
  appearance: none;
  font-size: 14px;
  line-height: 24px;
  text-align-last: center;
}
.picker-arrow {
  position: absolute;
  top: 10px;
  right: 8px;
  pointer-events: none;
}
.map {
  display: block;
  width: 100%;
}
.map path {
  stroke-width: 3;
  stroke-linejoin: round;
}
.map .none {
  fill: #e8e8e8;
  stroke: #c4c4c4;
}
.map .none:nth-child(n + 2) {
  fill-rule: evenodd;
}
.map .mid {
  fill: #767676;
  stroke: #6c6c6c;
}
.map .top {
  fill: #2a2a2a;
  stroke: #242424;
}
.map .sea {
  fill: #fff;
  stroke: none;
}
.map .water {
  fill: none;
  stroke: #fff;
  stroke-width: 5;
}
.map .coast {
  fill: none;
  stroke: #666;
}
.map .hatch {
  fill: none;
  stroke: #a5a5a5;
}
.legend {
  fill: #757575;
  font-family: "Liberation Sans", sans-serif;
  font-size: 13px;
}
.stats {
  width: 100%;
  margin-top: 44px;
  border-collapse: collapse;
  table-layout: fixed;
  background: #fff;
  text-align: center;
}
.stats th,
.stats td {
  box-sizing: border-box;
  padding: 0;
  border: 1px solid #c9c9c9;
  font-weight: 400;
}
.col-rank {
  width: 90px;
}
.stats th {
  height: 67px;
  background: #e1e1e1;
}
.stats th.active {
  background: #cdcdcd;
}
.sort {
  display: flex;
  flex-direction: column;
  align-items: center;
  gap: 9px;
  width: 100%;
  padding-bottom: 3px;
}
.stats tbody tr {
  height: 46px;
}
.stats tbody tr:nth-child(odd) {
  height: 45px;
}
.stats tbody tr:nth-child(2) {
  height: 47px;
}
.stats tbody tr.totals:first-child {
  height: 57px;
  background: #ececec;
  font-size: 18px;
}
.count {
  font-size: 18px;
}
.edge {
  position: absolute;
  top: 112px;
  right: 0;
  bottom: 0;
  width: 1px;
  background: #bdbdbd;
}
</style>
